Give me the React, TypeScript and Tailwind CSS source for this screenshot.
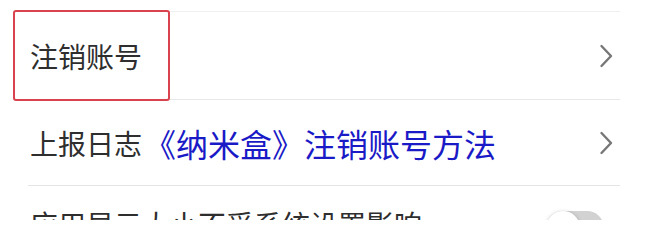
export default function App() {
  const Chevron = () => (
    <svg width="14" height="24" viewBox="0 0 14 24" fill="none" aria-hidden="true">
      <path d="M2.5 2 L12 12 L2.5 22" stroke="#777777" strokeWidth="2.4" strokeLinecap="round" strokeLinejoin="round" />
    </svg>
  )

  return (
    <div className="relative w-[650px] h-[220px] overflow-hidden bg-white font-['Noto_Sans_CJK_SC',sans-serif] text-[#2e2e2e]">
      <div className="h-[11px]" />
      <div className="ml-[28px] w-[592px]">
        <div className="h-px bg-[#efefef]" />
        <div className="flex h-[87px] items-center justify-between pl-[2px] pr-[7px]">
          <span className="text-[28px] leading-none">注销账号</span>
          <Chevron />
        </div>
        <div className="h-px bg-[#e8e8e8]" />
        <div className="flex h-[85px] items-center justify-between pl-[2px] pr-[7px]">
          <div className="flex items-center">
            <span className="text-[28px] leading-none">上报日志</span>
            <span className="ml-[2px] text-[32px] leading-none text-[#1a1ac6]">《纳米盒》注销账号方法</span>
          </div>
          <Chevron />
        </div>
        <div className="h-px bg-[#e4e4e4]" />
        <div className="flex items-start justify-between pl-[2px] pt-[24px]">
          <span className="text-[28px] leading-none">应用显示大小不受系统设置影响</span>
          <div className="relative mr-[16px] mt-[1px] h-[34px] w-[58px] rounded-full bg-[#d2d2d2]">
            <div className="absolute left-0 top-0 h-[34px] w-[34px] rounded-full bg-white shadow-[0_1px_4px_rgba(0,0,0,0.22)]" />
          </div>
        </div>
      </div>
      <div className="absolute left-[13px] top-[10px] h-[91px] w-[157px] rounded-[3px] border-2 border-[#d9434f]" />
    </div>
  )
}
